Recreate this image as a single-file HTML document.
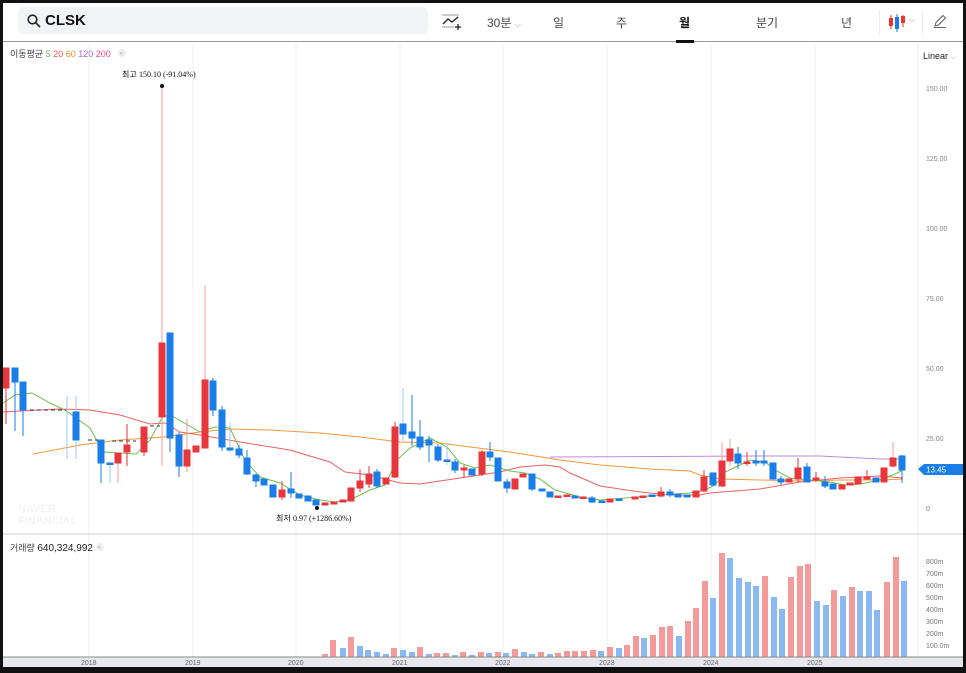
<!DOCTYPE html>
<html><head><meta charset="utf-8"><style>
*{margin:0;padding:0;box-sizing:border-box}
body{width:966px;height:673px;background:#111;overflow:hidden;font-family:"Liberation Sans","Noto Sans CJK KR",sans-serif;position:relative}
#app{position:absolute;left:3px;top:3px;width:960px;height:664px;background:#fff;overflow:hidden}
.hdr{position:absolute;left:0;top:0;width:960px;height:39px;border-bottom:1px solid #9a9a9a;background:#fff}
.search{position:absolute;left:15px;top:4px;width:410px;height:27px;background:#f2f3f5;border-radius:6px}
.search b{position:absolute;left:27px;top:5px;font-size:15px;color:#111}
.tab{position:absolute;top:11px;font-size:12px;color:#444}
</style></head><body>
<div id="app">
<div class="hdr">
 <div class="search">
  <svg width="14" height="14" style="position:absolute;left:9px;top:7px" viewBox="0 0 14 14"><circle cx="5.5" cy="5.5" r="4.3" fill="none" stroke="#222" stroke-width="1.6"/><line x1="8.7" y1="8.7" x2="13" y2="13" stroke="#222" stroke-width="1.6"/></svg>
  <b>CLSK</b>
 </div>
 <svg width="20" height="18" style="position:absolute;left:439px;top:10px" viewBox="0 0 20 18"><line x1="0" y1="2" x2="17" y2="2" stroke="#999"/><polyline points="1,11 6,6 10,9 16,4" fill="none" stroke="#222" stroke-width="1.3"/><line x1="0" y1="14" x2="12" y2="14" stroke="#999"/><line x1="13" y1="14" x2="19" y2="14" stroke="#222" stroke-width="1.3"/><line x1="16" y1="11" x2="16" y2="17" stroke="#222" stroke-width="1.3"/></svg>
 <div class="tab" style="left:484px">30분 <span style="font-size:8px;color:#999">⌵</span></div>
 <div class="tab" style="left:550px">일</div>
 <div class="tab" style="left:613px">주</div>
 <div class="tab" style="left:676px;color:#111;font-weight:bold">월</div>
 <div style="position:absolute;left:673px;top:37px;width:18px;height:3px;background:#111"></div>
 <div class="tab" style="left:753px">분기</div>
 <div class="tab" style="left:838px">년</div>
 <div style="position:absolute;left:876px;top:7px;width:1px;height:25px;background:#eee"></div>
 <svg width="18" height="18" style="position:absolute;left:885px;top:11px" viewBox="0 0 18 18"><line x1="3" y1="1" x2="3" y2="15" stroke="#e33"/><rect x="1" y="4" width="4" height="8" fill="#e33"/><line x1="9" y1="0" x2="9" y2="18" stroke="#1a7ee8"/><rect x="7" y="3" width="4" height="12" fill="#1a7ee8"/><line x1="15" y1="1" x2="15" y2="13" stroke="#e33"/><rect x="13" y="2" width="4" height="7" fill="#e33"/></svg>
 <div style="position:absolute;left:906px;top:12px;font-size:8px;color:#999">⌵</div>
 <div style="position:absolute;left:919px;top:7px;width:1px;height:25px;background:#eee"></div>
 <svg width="14" height="14" style="position:absolute;left:930px;top:11px" viewBox="0 0 14 14"><path d="M2 12 L3 8.5 L10 1.5 L12.5 4 L5.5 11 Z M1 13.5 H13" fill="none" stroke="#666" stroke-width="1.1"/></svg>
</div>
<svg width="960" height="625" style="position:absolute;left:0;top:40px" viewBox="3 43 960 625">
 <g stroke="#f1f2f4" stroke-width="1">
  <line x1="89" y1="43" x2="89" y2="657"/><line x1="193" y1="43" x2="193" y2="657"/><line x1="296" y1="43" x2="296" y2="657"/><line x1="400" y1="43" x2="400" y2="657"/><line x1="503" y1="43" x2="503" y2="657"/><line x1="607" y1="43" x2="607" y2="657"/><line x1="711" y1="43" x2="711" y2="657"/><line x1="815" y1="43" x2="815" y2="657"/>
 </g>
 <line x1="918" y1="43" x2="918" y2="657" stroke="#eceef0"/>
 <line x1="3" y1="534" x2="963" y2="534" stroke="#c8ccd0"/>
 <text x="10" y="57" font-size="9" fill="#444">이동평균 <tspan fill="#6abf4b">5</tspan> <tspan fill="#f05050">20</tspan> <tspan fill="#f0902a">60</tspan> <tspan fill="#a86ad8">120</tspan> <tspan fill="#ec4d8a">200</tspan></text>
 <circle cx="122" cy="53" r="4" fill="#eee"/><text x="119.5" y="55.5" font-size="6" fill="#aaa">×</text>
 <text x="923" y="59" font-size="9" fill="#222">Linear <tspan fill="#999" font-size="7">⌵</tspan></text>
 <g font-size="7" fill="#888"><text x="926" y="91">150.00</text><text x="926" y="161">125.00</text><text x="926" y="231">100.00</text><text x="926" y="301">75.00</text><text x="926" y="371">50.00</text><text x="926" y="441">25.00</text><text x="926" y="511">0</text></g>
 <path d="M918 469 L924 464 H966 V475 H924 Z" fill="#1a7ee8"/><text x="926" y="472.5" font-size="8" fill="#fff">13.45</text>
 <text x="18" y="512" font-size="11" font-weight="bold" fill="#f4f5f6">NAVER</text><text x="18" y="524" font-size="11" font-weight="bold" fill="#f4f5f6">FINANCIAL</text>
 <text x="122" y="77" font-size="8" fill="#111">최고 <tspan font-family="Liberation Serif" font-size="8">150.10 (-91.04%)</tspan></text>
 <circle cx="162" cy="86" r="2" fill="#111"/>
 <text x="276" y="521" font-size="8" fill="#111">최저 <tspan font-family="Liberation Serif">0.97 (+1286.60%)</tspan></text>
 <circle cx="317" cy="508" r="2" fill="#111"/>
 <g fill="none" stroke-width="1">
  <polyline stroke="#c08ae0" points="550,457 760,456 820,456 880,459 903,459"/>
  <polyline stroke="#f5963a" points="33,454 80,445 120,440 163,437 200,432 230,429 270,430 320,433 360,437 400,442 440,443 470,447 510,452 560,460 600,465 650,469 690,471 700,475 720,479 760,480 800,481 840,480 880,480 903,479"/>
  <polyline stroke="#f06060" points="3,412 20,411 60,409 90,410 120,415 150,424 165,423 180,432 200,435 240,442 290,450 330,462 345,472 370,475 400,483 420,484 460,478 500,472 520,467 545,465 560,467 570,473 600,486 640,492 670,495 700,495 710,493 760,489 800,482 840,478 880,476 903,478"/>
  <polyline stroke="#6cc04a" points="3,403 15,395 32,393 50,403 65,410 90,428 103,452 118,453 136,454 150,440 163,416 172,416 200,432 215,427 230,428 245,460 260,477 280,483 300,495 320,500 335,502 350,500 370,490 385,485 397,460 410,448 430,438 447,447 460,463 475,468 490,465 510,471 525,473 540,479 555,490 580,497 600,500 625,498 660,495 690,493 705,490 715,485 725,472 740,465 750,460 765,462 775,470 790,478 810,480 830,482 845,485 860,484 880,480 895,474 903,470"/>
  <path d="M30 410 H66 M88 440 H100 M112 441 H136 M150 426 H160" stroke="#333" stroke-dasharray="4,3"/>
 </g>
 <g id="c"></g>
 <g stroke-width="1">
 <!-- candles: x, bodyTop, bodyBot, wickTop, wickBot -->
 <g stroke="#e8363d" fill="#e8363d">
  <line x1="6" y1="368" x2="6" y2="424"/><rect x="3" y="368" width="6" height="20"/>
  <line x1="118" y1="453" x2="118" y2="483" stroke="#f59a9a"/><rect x="115" y="453" width="6" height="10"/>
  <line x1="127" y1="424" x2="127" y2="466"/><rect x="124" y="445" width="6" height="7"/>
  <line x1="144" y1="427" x2="144" y2="456"/><rect x="141" y="427" width="6" height="25"/>
  <line x1="162" y1="88" x2="162" y2="466" stroke="#f59a9a"/><rect x="159" y="343" width="6" height="74"/>
  <line x1="187" y1="419" x2="187" y2="472" stroke="#f59a9a"/><rect x="184" y="450" width="6" height="16"/>
  <rect x="193" y="446" width="6" height="6"/>
  <line x1="205" y1="285" x2="205" y2="448" stroke="#f59a9a"/><rect x="202" y="380" width="6" height="68"/>
  <line x1="282" y1="481" x2="282" y2="500"/><rect x="279" y="490" width="6" height="7"/>
  <rect x="322" y="503" width="6" height="2"/><rect x="331" y="502" width="6" height="2"/><rect x="340" y="500" width="6" height="2"/>
  <rect x="348" y="488" width="6" height="13"/>
  <line x1="360" y1="469" x2="360" y2="492"/><rect x="357" y="481" width="6" height="7"/>
  <line x1="369" y1="466" x2="369" y2="488"/><rect x="366" y="474" width="6" height="10"/>
  <rect x="383" y="478" width="6" height="6"/>
  <line x1="395" y1="422" x2="395" y2="478"/><rect x="392" y="427" width="6" height="50"/>
  <line x1="464" y1="465" x2="464" y2="478"/><rect x="461" y="468" width="6" height="2"/>
  <line x1="482" y1="450" x2="482" y2="476"/><rect x="479" y="452" width="6" height="22"/>
  <rect x="512" y="479" width="6" height="10"/><rect x="520" y="474" width="6" height="3"/>
  <rect x="555" y="496" width="6" height="1.5"/><rect x="564" y="495" width="6" height="1.5"/><rect x="580" y="497" width="6" height="1.5"/>
  <rect x="607" y="499" width="6" height="3"/><rect x="632" y="497" width="6" height="2"/><rect x="640" y="496" width="6" height="1.5"/>
  <line x1="661" y1="487" x2="661" y2="497"/><rect x="658" y="492" width="6" height="4"/>
  <rect x="693" y="491" width="6" height="6"/>
  <line x1="704" y1="470" x2="704" y2="492"/><rect x="701" y="477" width="6" height="14"/>
  <line x1="722" y1="442" x2="722" y2="487" stroke="#f59a9a"/><rect x="719" y="461" width="6" height="25"/>
  <line x1="730" y1="439" x2="730" y2="466" stroke="#f59a9a"/><rect x="727" y="449" width="6" height="12"/>
  <line x1="747" y1="452" x2="747" y2="466"/><rect x="744" y="462" width="6" height="1.5"/>
  <rect x="786" y="479" width="6" height="3"/>
  <line x1="798" y1="458" x2="798" y2="482"/><rect x="795" y="468" width="6" height="11"/>
  <line x1="816" y1="472" x2="816" y2="482"/><rect x="813" y="478" width="6" height="2"/>
  <rect x="839" y="485" width="6" height="4"/><rect x="847" y="483" width="6" height="2"/>
  <rect x="855" y="477" width="6" height="7"/><line x1="867" y1="470" x2="867" y2="480"/><rect x="864" y="477" width="6" height="2"/>
  <rect x="881" y="468" width="6" height="14"/>
  <line x1="893" y1="442" x2="893" y2="468" stroke="#f59a9a"/><rect x="890" y="458" width="6" height="8"/>
 </g>
 <g stroke="#1a7ee8" fill="#1a7ee8">
  <line x1="15" y1="368" x2="15" y2="431"/><rect x="12" y="368" width="6" height="14"/>
  <line x1="23" y1="382" x2="23" y2="436"/><rect x="20" y="382" width="6" height="28"/>
  <line x1="67" y1="396" x2="67" y2="459" stroke="#9cc6f5"/>
  <line x1="76" y1="396" x2="76" y2="459" stroke="#9cc6f5"/><rect x="73" y="412" width="6" height="28"/>
  <line x1="101" y1="440" x2="101" y2="483"/><rect x="98" y="440" width="6" height="23"/>
  <line x1="110" y1="464" x2="110" y2="483" stroke="#9cc6f5"/><rect x="107" y="463" width="6" height="1.5"/>
  <line x1="170" y1="333" x2="170" y2="452"/><rect x="167" y="333" width="6" height="105"/>
  <line x1="179" y1="432" x2="179" y2="477"/><rect x="176" y="435" width="6" height="31"/>
  <line x1="213" y1="378" x2="213" y2="416"/><rect x="210" y="381" width="6" height="29"/>
  <line x1="222" y1="406" x2="222" y2="451"/><rect x="219" y="410" width="6" height="37"/>
  <line x1="230" y1="423" x2="230" y2="452" stroke="#9cc6f5"/><rect x="227" y="448" width="6" height="2"/>
  <line x1="239" y1="445" x2="239" y2="458"/><rect x="236" y="449" width="6" height="6"/>
  <line x1="247" y1="450" x2="247" y2="475"/><rect x="244" y="458" width="6" height="16"/>
  <line x1="256" y1="474" x2="256" y2="487"/><rect x="253" y="475" width="6" height="6"/>
  <rect x="261" y="479" width="6" height="6"/><rect x="270" y="485" width="6" height="12"/>
  <line x1="291" y1="472" x2="291" y2="498"/><rect x="288" y="489" width="6" height="4"/>
  <rect x="296" y="494" width="6" height="4"/><rect x="305" y="496" width="6" height="5"/><rect x="313" y="500" width="6" height="5"/>
  <line x1="377" y1="469" x2="377" y2="488"/><rect x="374" y="472" width="6" height="14"/>
  <line x1="403" y1="388" x2="403" y2="441" stroke="#9cc6f5"/><rect x="400" y="424" width="6" height="10"/>
  <line x1="412" y1="395" x2="412" y2="446"/><rect x="409" y="432" width="6" height="6"/>
  <line x1="420" y1="420" x2="420" y2="450"/><rect x="417" y="437" width="6" height="10"/>
  <line x1="429" y1="436" x2="429" y2="462"/><rect x="426" y="440" width="6" height="5"/>
  <line x1="438" y1="444" x2="438" y2="462"/><rect x="435" y="447" width="6" height="13"/>
  <line x1="447" y1="445" x2="447" y2="465" stroke="#9cc6f5"/><rect x="444" y="460" width="6" height="1.5"/>
  <line x1="455" y1="459" x2="455" y2="473"/><rect x="452" y="462" width="6" height="8"/>
  <rect x="469" y="469" width="6" height="6"/>
  <line x1="490" y1="442" x2="490" y2="461"/><rect x="487" y="452" width="6" height="5"/>
  <rect x="495" y="458" width="6" height="23"/><line x1="507" y1="479" x2="507" y2="493"/><rect x="504" y="482" width="6" height="6"/>
  <line x1="532" y1="474" x2="532" y2="491"/><rect x="529" y="474" width="6" height="15"/>
  <rect x="539" y="489" width="6" height="2"/><rect x="547" y="492" width="6" height="5"/>
  <rect x="572" y="496" width="6" height="2"/><line x1="592" y1="496" x2="592" y2="503"/><rect x="589" y="498" width="6" height="4"/>
  <rect x="599" y="501" width="6" height="1.5"/><rect x="616" y="499" width="6" height="1.5"/><rect x="649" y="495" width="6" height="1.5"/>
  <line x1="670" y1="489" x2="670" y2="497"/><rect x="667" y="492" width="6" height="3"/><rect x="675" y="494" width="6" height="3"/><rect x="684" y="495" width="6" height="2"/>
  <rect x="710" y="473" width="6" height="12"/>
  <line x1="738" y1="447" x2="738" y2="469"/><rect x="735" y="454" width="6" height="9"/>
  <line x1="756" y1="450" x2="756" y2="466"/><rect x="753" y="461" width="6" height="2"/>
  <line x1="764" y1="450" x2="764" y2="466"/><rect x="761" y="461" width="6" height="2"/>
  <rect x="770" y="463" width="6" height="16"/><line x1="781" y1="476" x2="781" y2="485"/><rect x="778" y="479" width="6" height="3"/>
  <line x1="807" y1="463" x2="807" y2="482"/><rect x="804" y="467" width="6" height="15"/>
  <line x1="825" y1="476" x2="825" y2="488"/><rect x="822" y="482" width="6" height="4"/><rect x="830" y="484" width="6" height="5"/>
  <rect x="873" y="478" width="6" height="4"/>
  <line x1="902" y1="455" x2="902" y2="483"/><rect x="899" y="456" width="6" height="14"/>
 </g>
 </g>
 <!-- volume -->
 <text x="10" y="551" font-size="9" fill="#444">거래량 <tspan fill="#222" font-size="10">640,324,992</tspan></text>
 <circle cx="100" cy="547" r="4" fill="#f0f0f0"/><text x="97.5" y="549.5" font-size="6" fill="#aaa">×</text>
 <g font-size="7" fill="#777"><text x="926" y="564">800m</text><text x="926" y="576">700m</text><text x="926" y="588">600m</text><text x="926" y="600">500m</text><text x="926" y="612">400m</text><text x="926" y="624">300m</text><text x="926" y="636">200m</text><text x="926" y="648">100.0m</text></g>
 <g fill="#f59a9a">
  <rect x="322" y="654" width="6" height="3"/><rect x="330" y="640" width="6" height="17"/><rect x="348" y="637" width="6" height="20"/><rect x="391" y="648" width="6" height="9"/><rect x="417" y="647" width="6" height="10"/><rect x="434" y="653" width="6" height="4"/><rect x="443" y="653" width="6" height="4"/><rect x="460" y="652" width="6" height="5"/><rect x="478" y="652" width="6" height="5"/><rect x="495" y="652" width="6" height="5"/><rect x="512" y="649" width="6" height="8"/><rect x="538" y="652" width="6" height="5"/><rect x="555" y="653" width="6" height="4"/><rect x="564" y="651" width="6" height="6"/><rect x="572" y="651" width="6" height="6"/><rect x="581" y="651" width="6" height="6"/><rect x="590" y="650" width="6" height="7"/><rect x="607" y="647" width="6" height="10"/><rect x="624" y="645" width="6" height="12"/><rect x="633" y="636" width="6" height="21"/><rect x="650" y="635" width="6" height="22"/><rect x="659" y="627" width="6" height="30"/><rect x="667" y="626" width="6" height="31"/><rect x="685" y="621" width="6" height="36"/><rect x="693" y="608" width="6" height="49"/><rect x="702" y="581" width="6" height="76"/><rect x="719" y="553" width="6" height="104"/><rect x="762" y="576" width="6" height="81"/><rect x="788" y="577" width="6" height="80"/><rect x="797" y="566" width="6" height="91"/><rect x="805" y="564" width="6" height="93"/><rect x="831" y="590" width="6" height="67"/><rect x="849" y="587" width="6" height="70"/><rect x="884" y="582" width="6" height="75"/><rect x="893" y="557" width="6" height="100"/>
 </g>
 <g fill="#8ab8f0">
  <rect x="340" y="648" width="6" height="9"/><rect x="357" y="646" width="6" height="11"/><rect x="365" y="650" width="6" height="7"/><rect x="374" y="652" width="6" height="5"/><rect x="383" y="654" width="6" height="3"/><rect x="400" y="650" width="6" height="7"/><rect x="409" y="652" width="6" height="5"/><rect x="426" y="654" width="6" height="3"/><rect x="452" y="655" width="6" height="2"/><rect x="469" y="655" width="6" height="2"/><rect x="486" y="653" width="6" height="4"/><rect x="503" y="653" width="6" height="4"/><rect x="521" y="652" width="6" height="5"/><rect x="529" y="654" width="6" height="3"/><rect x="547" y="654" width="6" height="3"/><rect x="598" y="651" width="6" height="6"/><rect x="616" y="648" width="6" height="9"/><rect x="641" y="638" width="6" height="19"/><rect x="676" y="636" width="6" height="21"/><rect x="710" y="598" width="6" height="59"/><rect x="727" y="558" width="6" height="99"/><rect x="736" y="578" width="6" height="79"/><rect x="745" y="582" width="6" height="75"/><rect x="753" y="586" width="6" height="71"/><rect x="771" y="597" width="6" height="60"/><rect x="779" y="609" width="6" height="48"/><rect x="814" y="601" width="6" height="56"/><rect x="823" y="605" width="6" height="52"/><rect x="840" y="596" width="6" height="61"/><rect x="857" y="591" width="6" height="66"/><rect x="866" y="591" width="6" height="66"/><rect x="874" y="610" width="6" height="47"/><rect x="901" y="581" width="6" height="76"/>
 </g>
 <rect x="3" y="657" width="960" height="10" fill="#e6e8ec"/>
 <line x1="3" y1="657" x2="963" y2="657" stroke="#888"/>
 <g font-size="7" fill="#666"><text x="81" y="665">2018</text><text x="185" y="665">2019</text><text x="288" y="665">2020</text><text x="392" y="665">2021</text><text x="495" y="665">2022</text><text x="599" y="665">2023</text><text x="703" y="665">2024</text><text x="807" y="665">2025</text></g>
</svg>
</div>
</body></html>
